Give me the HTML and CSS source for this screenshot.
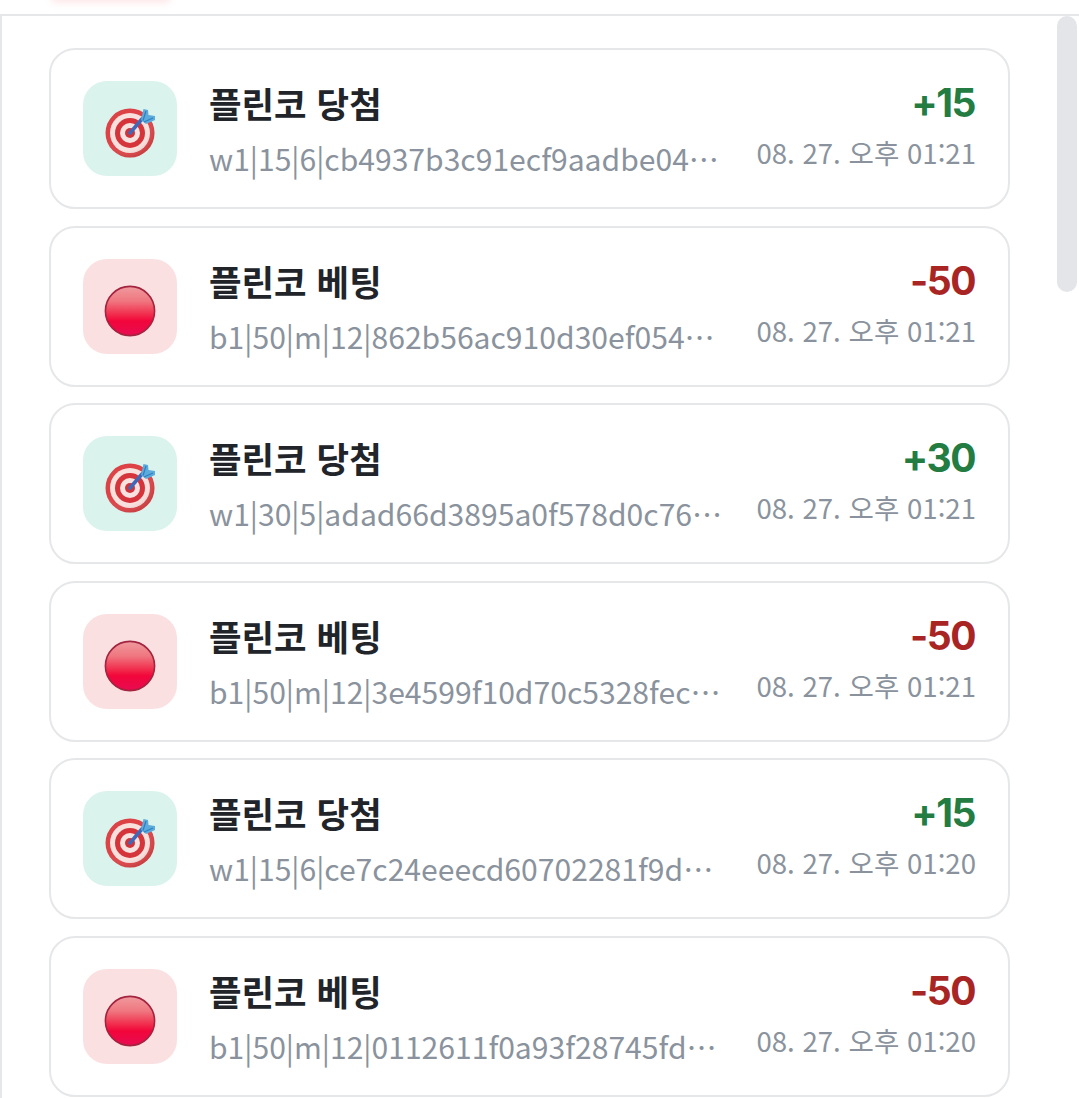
FILE: index.html
```html
<!DOCTYPE html>
<html lang="ko">
<head>
  <meta charset="UTF-8">
  <meta name="viewport" content="width=device-width, initial-scale=1.0">
  <title>플린코 내역</title>
  <link rel="stylesheet" href="styles.css">
</head>
<body>
  <svg class="defs" width="0" height="0" aria-hidden="true">
    <defs>
      <linearGradient id="ballShine" x1="0" y1="0" x2="0" y2="1">
        <stop offset="0" stop-color="#ee9a9e"/>
        <stop offset="0.3" stop-color="#f0767f"/>
        <stop offset="0.58" stop-color="#f1294a"/>
        <stop offset="0.7" stop-color="#f2063a"/>
        <stop offset="1" stop-color="#e80b52"/>
      </linearGradient>
      <radialGradient id="targetShade" cx="40%" cy="38%" r="62%">
        <stop offset="0.7" stop-color="#fff" stop-opacity="0"/>
        <stop offset="1" stop-color="#7a3a3a" stop-opacity=".18"/>
      </radialGradient>
      <symbol id="ball" viewBox="0 0 52 52">
        <circle cx="26" cy="26" r="24.6" fill="url(#ballShine)" stroke="#a3243f" stroke-width="1.6"/>
      </symbol>
      <symbol id="target" viewBox="0 0 52 52">
        <circle cx="26" cy="26" r="24.5" fill="#dc4246"/>
        <circle cx="26" cy="26" r="20" fill="#f8e0dd"/>
        <circle cx="26" cy="26" r="15" fill="#d5343a"/>
        <circle cx="26" cy="26" r="10" fill="#f7e2df"/>
        <circle cx="26" cy="26" r="5" fill="#d0343a"/>
        <circle cx="26" cy="26" r="24.5" fill="url(#targetShade)"/>
        <path d="M26 26 L38 12" stroke="#3f68b8" stroke-width="3.6" stroke-linecap="round"/>
        <path d="M37 13 L39.5 2 L44 3 L44.5 8 L51 9 L51 13 L42 17 Z" fill="#5cabdc"/>
        <path d="M39 13.5 L42 4 M40 15 L49 11" stroke="#2f7fc0" stroke-width="1.2"/>
      </symbol>
    </defs>
  </svg>

  <header class="top-bar">
    <div class="tab-glow"></div>
  </header>

  <main class="history">
    <div class="scroll-thumb"></div>
    <ul class="history-list">
      <li class="item">
        <div class="icon icon-win"><svg class="icon-img"><use href="#target"/></svg></div>
        <div class="info">
          <div class="row">
            <span class="title">플린코 당첨</span>
            <span class="amount plus">+15</span>
          </div>
          <div class="row">
            <span class="memo">w1|15|6|cb4937b3c91ecf9aadbe04…</span>
            <span class="date">08. 27. 오후 01:21</span>
          </div>
        </div>
      </li>
      <li class="item">
        <div class="icon icon-bet"><svg class="icon-img"><use href="#ball"/></svg></div>
        <div class="info">
          <div class="row">
            <span class="title">플린코 베팅</span>
            <span class="amount minus">-50</span>
          </div>
          <div class="row">
            <span class="memo">b1|50|m|12|862b56ac910d30ef054…</span>
            <span class="date">08. 27. 오후 01:21</span>
          </div>
        </div>
      </li>
      <li class="item">
        <div class="icon icon-win"><svg class="icon-img"><use href="#target"/></svg></div>
        <div class="info">
          <div class="row">
            <span class="title">플린코 당첨</span>
            <span class="amount plus">+30</span>
          </div>
          <div class="row">
            <span class="memo">w1|30|5|adad66d3895a0f578d0c76…</span>
            <span class="date">08. 27. 오후 01:21</span>
          </div>
        </div>
      </li>
      <li class="item">
        <div class="icon icon-bet"><svg class="icon-img"><use href="#ball"/></svg></div>
        <div class="info">
          <div class="row">
            <span class="title">플린코 베팅</span>
            <span class="amount minus">-50</span>
          </div>
          <div class="row">
            <span class="memo">b1|50|m|12|3e4599f10d70c5328fec…</span>
            <span class="date">08. 27. 오후 01:21</span>
          </div>
        </div>
      </li>
      <li class="item">
        <div class="icon icon-win"><svg class="icon-img"><use href="#target"/></svg></div>
        <div class="info">
          <div class="row">
            <span class="title">플린코 당첨</span>
            <span class="amount plus">+15</span>
          </div>
          <div class="row">
            <span class="memo">w1|15|6|ce7c24eeecd60702281f9d…</span>
            <span class="date">08. 27. 오후 01:20</span>
          </div>
        </div>
      </li>
      <li class="item">
        <div class="icon icon-bet"><svg class="icon-img"><use href="#ball"/></svg></div>
        <div class="info">
          <div class="row">
            <span class="title">플린코 베팅</span>
            <span class="amount minus">-50</span>
          </div>
          <div class="row">
            <span class="memo">b1|50|m|12|0112611f0a93f28745fd…</span>
            <span class="date">08. 27. 오후 01:20</span>
          </div>
        </div>
      </li>
    </ul>
  </main>
</body>
</html>
```

FILE: styles.css
```css
* {
  box-sizing: border-box;
  margin: 0;
  padding: 0;
}

html, body {
  height: 100%;
  overflow: hidden;
}

body {
  font-family: "Noto Sans CJK KR", "Noto Sans", sans-serif;
  background-color: #fff;
  color: #212529;
}

.defs {
  position: absolute;
}

.top-bar {
  position: relative;
  height: 16px;
  border-bottom: 2px solid #e6e7e9;
  overflow: hidden;
}

/* bottom of the active tab's shadow, the rest is scrolled away */
.tab-glow {
  position: absolute;
  left: 56px;
  top: -12px;
  width: 110px;
  height: 10px;
  background: #fbd3d6;
  box-shadow: 0 0 8px 4px #fde3e5;
}

.history {
  position: relative;
  height: calc(100vh - 16px);
  border-left: 2px solid #e6e7e9;
  overflow: hidden;
}

.scroll-thumb {
  position: absolute;
  right: 2px;
  top: 0;
  width: 20px;
  height: 276px;
  border-radius: 10px;
  background: #e3e5e9;
}

.history-list {
  list-style: none;
  display: flex;
  flex-direction: column;
  gap: 16.6px;
  padding: 32px 69px 0 47px;
}

.item {
  display: flex;
  align-items: center;
  gap: 32px;
  flex: none;
  height: 161px;
  padding: 0 32px;
  border: 2px solid #e6e7e9;
  border-radius: 26px;
  background: #fff;
}

.icon {
  flex: none;
  display: flex;
  align-items: center;
  justify-content: center;
  width: 94px;
  height: 95px;
  padding-top: 9px;
  border-radius: 24px;
}

.icon-win {
  background: #daf3ec;
}

.icon-bet {
  background: #fbe0e2;
}

.icon-img {
  width: 52px;
  height: 52px;
}

.info {
  flex: 1;
  min-width: 0;
  display: flex;
  flex-direction: column;
  gap: 13px;
  padding-top: 2px;
}

.row {
  display: flex;
  align-items: center;
  justify-content: space-between;
}

.title {
  font-size: 35.4px;
  line-height: 44px;
  font-weight: 700;
}

.amount {
  font-family: Inter, "Noto Sans", sans-serif;
  font-size: 39px;
  line-height: 44px;
  font-weight: 700;
  letter-spacing: -1.5px;
  margin-right: 1px;
}

.plus {
  color: #237c41;
}

.minus {
  color: #a92524;
}

.memo {
  font-size: 30.1px;
  line-height: 40px;
  color: #8a939d;
  white-space: nowrap;
}

.date {
  font-size: 27.6px;
  line-height: 29px;
  margin-bottom: 11px;
  color: #8a939d;
}
```
